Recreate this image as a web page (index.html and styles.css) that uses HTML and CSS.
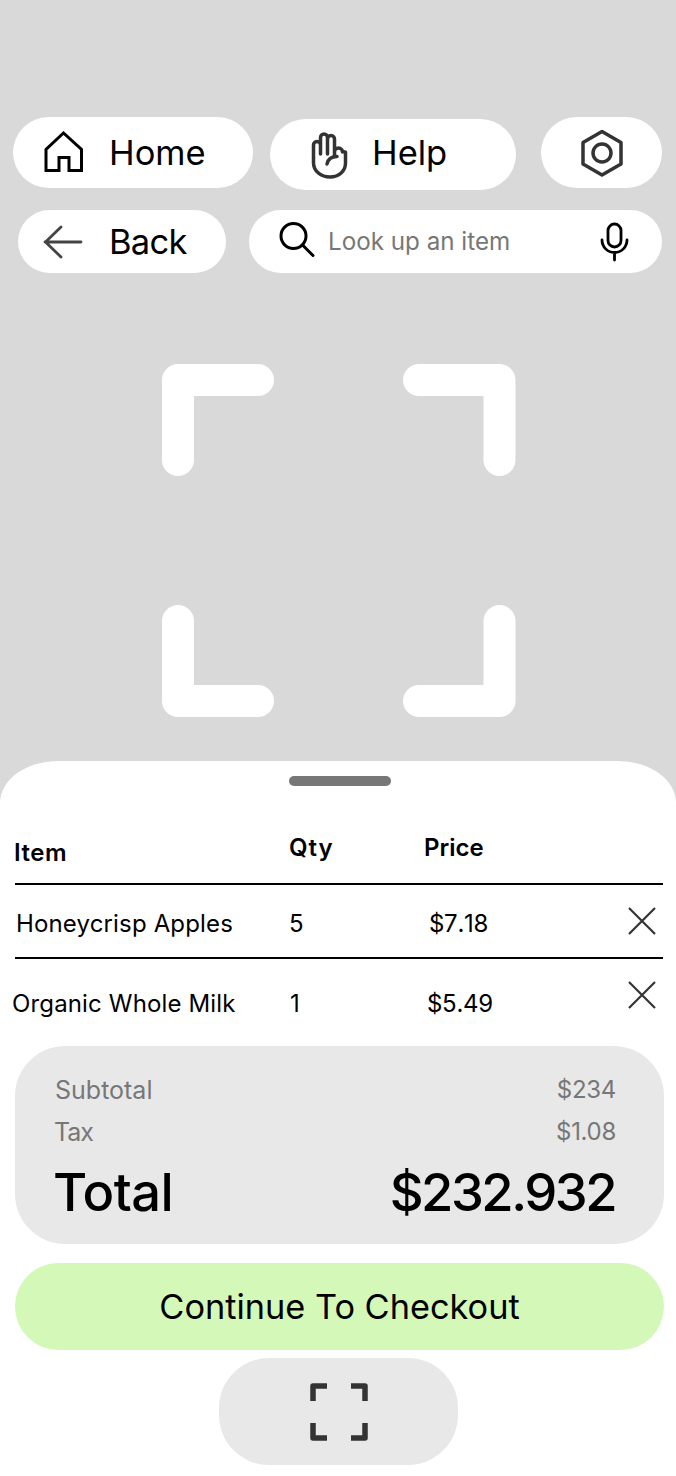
FILE: index.html
```html
<!DOCTYPE html>
<html lang="en">
<head>
    <meta charset="UTF-8">
    <meta name="viewport" content="width=device-width, initial-scale=1.0">
    <title>Scan Items</title>
    <link rel="stylesheet" href="styles.css">
</head>
<body>
    <div class="camera">
        <!-- Top buttons -->
        <div class="nav-row nav-row-top">
            <button class="pill home-pill">
                <svg class="icon" width="60" height="60" viewBox="0 0 60 60"><path d="M11 47.5V26.5L28.5 10L46.5 26.5V47.5H34V34.500H24V47.500Z" fill="none" stroke="#000" stroke-width="3" stroke-linejoin="miter"/></svg>
                <span>Home</span>
            </button>
            <button class="pill help-pill">
                <svg class="icon" width="60" height="60" viewBox="0 0 60 60"><path d="M13.500 38V20a3.500 3.500 0 0 1 7 0V29M20.500 29V12.500a3.500 3.500 0 0 1 7 0V29M27.500 14a3.500 3.500 0 0 1 7 0V30M34.500 30V27a4 4 0 0 1 8 0 4 4 0 0 1 3 0V38C45.500 46 39 52 30 52S13.500 46 13.500 38M27 39C28 34 32 31.500 37 31.500" fill="none" stroke="#333" stroke-width="3.5" stroke-linecap="round" stroke-linejoin="round"/></svg>
                <span class="help-label">Help</span>
            </button>
            <button class="pill settings-pill">
                <svg width="48" height="50" viewBox="0 0 48 50"><path d="M24 3.500L43 14.500V36L24 47L5 36V14.500Z" fill="none" stroke="#333" stroke-width="3.500" stroke-linejoin="round"/><circle cx="24" cy="25" r="9" fill="none" stroke="#333" stroke-width="3.500"/></svg>
            </button>
        </div>
        <div class="nav-row">
            <button class="pill back-pill">
                <svg class="icon" width="40" height="40" viewBox="0 0 40 40"><path d="M38 20H2M18 5L2.500 20L18 35" fill="none" stroke="#444" stroke-width="2.800" stroke-linecap="round" stroke-linejoin="round"/></svg>
                <span class="back-label">Back</span>
            </button>
            <div class="pill search-pill">
                <svg class="icon" width="60" height="55" viewBox="0 0 60 55"><circle cx="23.500" cy="22" r="12.500" fill="none" stroke="#000" stroke-width="3"/><path d="M32.500 31L43 41.500" stroke="#000" stroke-width="3" stroke-linecap="round"/></svg>
                <span class="search-text">Look up an item</span>
                <svg class="mic" width="50" height="55" viewBox="0 0 50 55"><rect x="18" y="10" width="13" height="23" rx="6.500" fill="none" stroke="#000" stroke-width="2.800"/><path d="M12 26C12 33 17.500 38.500 24.500 38.500S37 33 37 26M24.500 38.500V46" fill="none" stroke="#000" stroke-width="2.800" stroke-linecap="round"/></svg>
            </div>
        </div>

        <!-- Scan frame -->
        <svg class="frame" width="354" height="353" viewBox="0 0 354 353">
            <path d="M16 96V16H96M257 16H337.500V96M16 257V337H96M257 337H337.500V257" fill="none" stroke="#fff" stroke-width="32" stroke-linecap="round" stroke-linejoin="round"/>
        </svg>
    </div>

    <div class="sheet">
        <div class="handle"></div>

        <div class="cart-head">
            <div class="col-item">Item</div>
            <div class="col-qty">Qty</div>
            <div class="col-price">Price</div>
        </div>
        <div class="cart-row row-one">
            <div class="item-apples">Honeycrisp Apples</div>
            <div class="qty-five">5</div>
            <div class="price price-apples">$7.18</div>
            <svg class="remove" width="28" height="28" viewBox="0 0 28 28"><path d="M1 1L27 27M27 1L1 27" stroke="#333" stroke-width="2.200"/></svg>
        </div>
        <div class="cart-row row-two">
            <div class="item-milk">Organic Whole Milk</div>
            <div class="qty-one">1</div>
            <div class="price price-milk">$5.49</div>
            <svg class="remove remove-milk" width="28" height="28" viewBox="0 0 28 28"><path d="M1 1L27 27M27 1L1 27" stroke="#333" stroke-width="2.200"/></svg>
        </div>

        <div class="summary">
            <div class="summary-line"><span>Subtotal</span><span class="amount">$234</span></div>
            <div class="summary-line"><span class="tax-label">Tax</span><span class="amount">$1.08</span></div>
            <div class="summary-total"><span class="total-label">Total</span><span class="total-amount">$232.932</span></div>
        </div>

        <button class="checkout">Continue To Checkout</button>

        <button class="scan">
            <svg width="58" height="58" viewBox="0 0 58 58"><path d="M3 18V3H17M41 3H55V18M3 40V55H17M41 55H55V40" fill="none" stroke="#333" stroke-width="5.500" stroke-linejoin="round"/></svg>
        </button>
    </div>
</body>
</html>
```

FILE: styles.css
```css
* {
    box-sizing: border-box;
}
html, body {
    margin: 0;
    padding: 0;
}
body {
    width: 676px;
    height: 1476px;
    overflow: hidden;
    background-color: #d9d9d9;
    font-family: Inter, "Noto Sans", sans-serif;
    color: #000;
}
button {
    font-family: inherit;
    color: inherit;
    border: none;
    cursor: pointer;
}
.camera {
    height: 761px;
    padding-top: 117px;
}
.nav-row {
    display: flex;
    align-items: flex-start;
}
.nav-row-top {
    height: 73px;
    margin-bottom: 20px;
}
.pill {
    display: flex;
    align-items: center;
    padding: 0;
    background-color: #fff;
    border-radius: 36px;
    font-size: 34.5px;
}
.icon {
    flex: none;
}
.home-pill {
    width: 240px;
    height: 71px;
    margin-left: 13px;
    padding-left: 22px;
    gap: 14px;
}
.help-pill {
    width: 246px;
    height: 71px;
    margin-left: 17px;
    margin-top: 2px;
    padding-left: 30px;
    gap: 12px;
}
.help-label {
    margin-top: -4px;
}
.settings-pill {
    width: 121px;
    height: 71px;
    margin-left: 25px;
    justify-content: center;
}
.back-pill {
    width: 208px;
    height: 63px;
    margin-left: 18px;
    padding-left: 25px;
    gap: 26px;
    border-radius: 32px;
}
.back-label {
    letter-spacing: -0.7px;
}
.search-pill {
    width: 413px;
    height: 63px;
    margin-left: 23px;
    padding-left: 21px;
    border-radius: 32px;
}
.search-text {
    margin-left: -2px;
    font-size: 24.2px;
    color: #777;
}
.mic {
    margin-left: auto;
    margin-right: 22px;
}
.frame {
    display: block;
    margin: 91px 0 0 162px;
}
.sheet {
    height: 715px;
    padding-top: 15px;
    background-color: #fff;
    border-radius: 58px 58px 0 0 / 42px 42px 0 0;
}
.handle {
    width: 102px;
    height: 10px;
    margin-left: 289px;
    background-color: #777;
    border-radius: 5px;
}
.cart-head {
    display: grid;
    grid-template-columns: 289px 135px 1fr;
    height: 99px;
    margin: 0 13px 0 15px;
    padding-top: 47px;
    border-bottom: 2px solid #000;
    font-size: 24px;
    font-weight: 600;
}
.col-item {
    margin-left: -1px;
    padding-top: 5px;
    letter-spacing: 0.5px;
}
.col-qty {
    margin-left: -15px;
    letter-spacing: 1px;
}
.col-price {
    margin-left: -15px;
}
.cart-row {
    display: grid;
    grid-template-columns: 274px 135px 1fr 28px;
    margin: 0 13px 0 15px;
    font-size: 24px;
    letter-spacing: 0.15px;
}
.row-one {
    height: 74px;
    padding: 24px 7px 0 0;
    border-bottom: 2px solid #000;
}
.row-two {
    height: 87px;
    padding: 30px 7px 0 0;
}
.item-apples {
    margin-left: 1px;
    white-space: nowrap;
}
.item-milk {
    margin-left: -3px;
    white-space: nowrap;
}
.qty-one {
    margin-left: 1px;
}
.price {
    font-kerning: none;
    letter-spacing: -0.3px;
}
.price-apples {
    margin-left: 5px;
}
.price-milk {
    margin-left: 3px;
}
.remove {
    margin-top: -2px;
}
.remove-milk {
    margin-top: -8px;
}
.summary {
    width: 649px;
    height: 198px;
    margin-left: 15px;
    padding: 29px 48px 0 40px;
    background-color: #e8e8e8;
    border-radius: 50px;
}
.summary-line {
    display: flex;
    justify-content: space-between;
    height: 42px;
    font-size: 25px;
    color: #777;
}
.amount {
    font-size: 24px;
    letter-spacing: -0.3px;
}
.tax-label {
    margin-left: -1px;
    letter-spacing: -1px;
}
.summary-total {
    display: flex;
    justify-content: space-between;
    margin-top: 1px;
    font-size: 52.5px;
    font-weight: 500;
}
.total-label {
    margin-left: -2px;
    letter-spacing: -0.6px;
}
.total-amount {
    margin-right: 1px;
    letter-spacing: -2.5px;
}
.checkout {
    display: block;
    width: 649px;
    height: 87px;
    margin: 19px 0 0 15px;
    background-color: #d4f8b8;
    border-radius: 44px;
    font-size: 34.3px;
}
.scan {
    display: flex;
    align-items: center;
    justify-content: center;
    width: 239px;
    height: 107px;
    margin: 8px 0 0 219px;
    background-color: #e8e8e8;
    border-radius: 50px;
}
```
